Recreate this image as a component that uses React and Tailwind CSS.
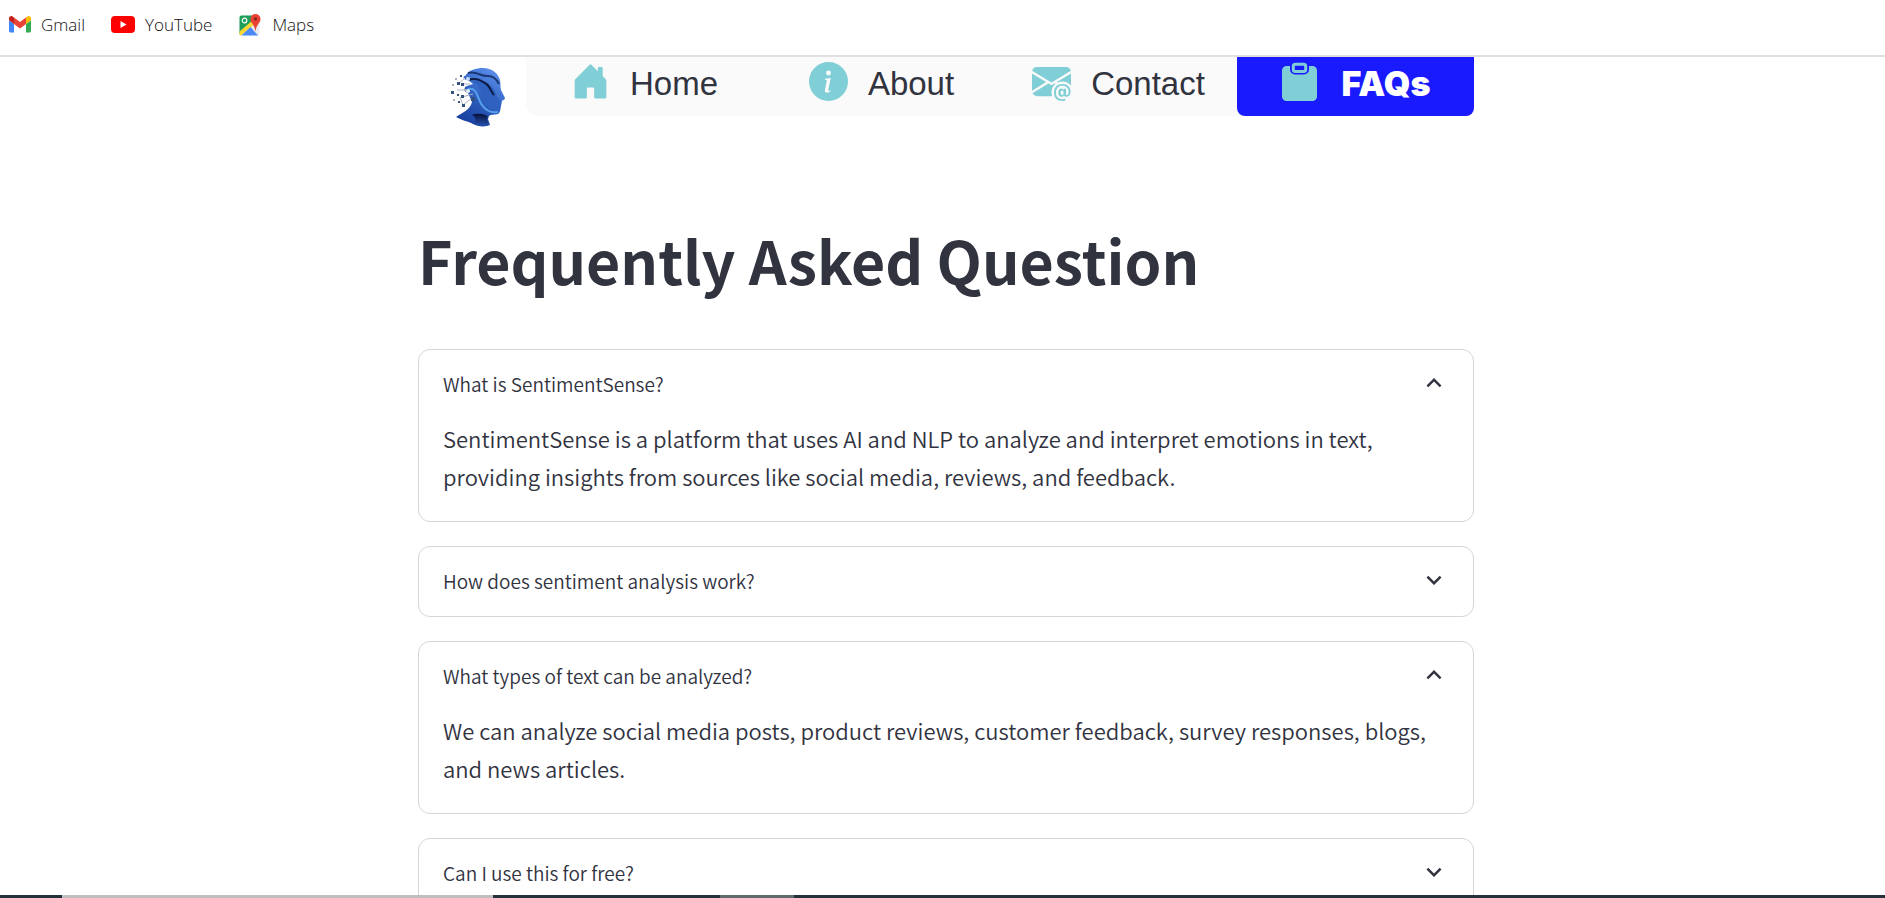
import { useState } from "react";
import { BsHouseDoorFill, BsInfoCircleFill, BsEnvelopeAtFill } from "react-icons/bs";
import { MdExpandLess, MdExpandMore } from "react-icons/md";

const GmailIcon = () => (
  <svg viewBox="0 0 88 66" className="w-[22px] shrink-0" aria-hidden="true">
    <path fill="#4285f4" d="M6 66h14V32L0 17v43c0 3.3 2.7 6 6 6" />
    <path fill="#34a853" d="M68 66h14c3.300 0 6-2.700 6-6V17L68 32" />
    <path fill="#fbbc04" d="M68 6v26l20-15V9c0-7.400-8.500-11.600-14.400-7.200" />
    <path fill="#ea4335" d="M20 32V6l24 18L68 6v26L44 50" />
    <path fill="#c5221f" d="M0 9v8l20 15V6l-5.600-4.200C8.500-2.600 0 1.600 0 9" />
  </svg>
);

const YouTubeIcon = () => (
  <svg viewBox="0 0 24 17" className="w-6 shrink-0" aria-hidden="true">
    <rect width="24" height="17" rx="4" fill="#f00" />
    <path d="M9.500 5v7l6-3.500z" fill="#fff" />
  </svg>
);

const MapsIcon = () => (
  <svg viewBox="0 0 24 24" className="w-6 shrink-0" aria-hidden="true">
    <rect x="1.500" y="2.500" width="20" height="20" rx="2" fill="#e8eaed" />
    <path d="M3.500 2.500h13L12 12 1.500 21.500v-17a2 2 0 0 1 2-2" fill="#1e9e5a" />
    <path d="M1.500 18.500 15 7l3 3L3 22.500H2l-.5-1z" fill="#fdd835" />
    <path d="M3.500 22.500 12.500 14l7.500 8.500z" fill="#4c8bf5" />
    <circle cx="6.500" cy="7.500" r="2.300" fill="none" stroke="#fff" strokeWidth="1.200" />
    <path d="M17.500 1a5 5 0 0 0-5 5c0 4.200 4.200 5.200 4.700 11.500h.6C18.300 11.200 22.500 10.200 22.500 6a5 5 0 0 0-5-5" fill="#ea4335" />
    <circle cx="17.500" cy="6" r="1.800" fill="#8c2a22" />
  </svg>
);

const ClipboardIcon = ({ className }) => (
  <svg viewBox="0 0 39 39" className={className} aria-hidden="true">
    <path
      fill="currentColor"
      d="M5.500 4H9v3.500a5 5 0 0 0 5 5h9a5 5 0 0 0 5-5V4h3.500a4.500 4.500 0 0 1 4.500 4.500v26a4.500 4.500 0 0 1-4.500 4.500h-26A4.500 4.500 0 0 1 1 34.500v-26A4.500 4.500 0 0 1 5.500 4"
    />
    <rect x="12.300" y="2.200" width="12.400" height="7.200" rx="2" fill="none" stroke="currentColor" strokeWidth="3" />
  </svg>
);

const HeadLogo = () => (
  <svg viewBox="0 0 56 60" className="w-14 shrink-0" role="img" aria-label="SentimentSense">
    <defs>
      <linearGradient id="head" x1="0.200" y1="1" x2="0.700" y2="0">
        <stop offset="0" stopColor="#173c9c" />
        <stop offset="0.500" stopColor="#2e5fbd" />
        <stop offset="1" stopColor="#5a8eea" />
      </linearGradient>
      <linearGradient id="neck" x1="0" y1="0" x2="0" y2="1">
        <stop offset="0" stopColor="#06113a" />
        <stop offset="1" stopColor="#2450ad" />
      </linearGradient>
    </defs>
    <path
      fill="url(#head)"
      d="M15 9C19 3 26 1 33 1c9 0 15 5 17 12 1 4 0 7 1 10l4 8c0 2-3 2-3 3l-1 5c-1 2 0 6-3 8-3 1-7 0-9 2l-1 3 2 6c-4 2-12 2-17-1-5-3-10-3-17-7 7-5 14-7 16-15l-4-9c-4-1-5-6-1-7l6-2-5-4c-4 0-5-2-4-4"
    />
    <path fill="#2f62c0" d="M22 14c9-3 12 2 18 5 6 3 5 11 11 16l-1 9c-8 2-13-3-16-11-3-7-4-14-12-19" />
    <path fill="url(#neck)" d="M22 48c5-2 9-1 14 0 2 1 2 2 1 4l2 5c-4 2-10 2-14 0 1-4 1-7-3-9" />
    <path fill="none" stroke="#1b3877" strokeWidth="2" d="M18 6c8-3 13 4 20 3 6 0 9 4 11 8" />
    <path fill="none" stroke="#0d1c44" strokeWidth="2" d="M18 13c9-3 13 1 17 3 6 3 5 8 9 12" />
    <path fill="none" stroke="#58a0ee" strokeWidth="2" d="M18 22c10-2 9 10 14 16 4 6 10 8 16 7" />
    <circle cx="18" cy="24" r="2" fill="#e8f0fc" />
    <circle cx="18" cy="12" r="2" fill="#c9dbf8" />
    <path fill="none" stroke="#aab4c6" strokeWidth="1" d="M12 17h8M7 23h10M12 30l11-3M13 38l-3-8M13 38l10-8M8 17l7-6" />
    <g fill="#35517f">
      <rect x="10" y="8" width="2" height="2" />
      <rect x="7" y="15" width="3" height="3" />
      <rect x="11" y="16" width="3" height="3" />
      <rect x="1" y="24" width="3" height="3" />
      <rect x="7" y="27" width="2" height="2" />
      <rect x="11" y="28" width="3" height="3" />
      <rect x="21" y="30" width="4" height="4" />
      <rect x="12" y="37" width="3" height="3" />
      <rect x="8" y="34" width="2" height="2" />
    </g>
    <g fill="#a9b1bf">
      <rect x="2" y="17" width="2" height="2" />
      <rect x="3" y="32" width="2" height="2" />
      <rect x="5" y="11" width="2" height="2" />
      <rect x="14" y="22" width="2" height="2" />
    </g>
  </svg>
);

const bookmarks = [
  { label: "Gmail", Icon: GmailIcon },
  { label: "YouTube", Icon: YouTubeIcon },
  { label: "Maps", Icon: MapsIcon },
];

const navItems = [
  { label: "Home", Icon: BsHouseDoorFill },
  { label: "About", Icon: BsInfoCircleFill },
  { label: "Contact", Icon: BsEnvelopeAtFill },
  { label: "FAQs", Icon: ClipboardIcon, active: true },
];

const faqs = [
  {
    question: "What is SentimentSense?",
    answer:
      "SentimentSense is a platform that uses AI and NLP to analyze and interpret emotions in text, providing insights from sources like social media, reviews, and feedback.",
    open: true,
  },
  {
    question: "How does sentiment analysis work?",
    answer: "Sentiment analysis uses language models to classify the emotion expressed in text.",
  },
  {
    question: "What types of text can be analyzed?",
    answer:
      "We can analyze social media posts, product reviews, customer feedback, survey responses, blogs, and news articles.",
    open: true,
  },
  { question: "Can I use this for free?", answer: "Yes, you can use it for free." },
];

function Faq({ id, question, answer, initiallyOpen }) {
  const [open, setOpen] = useState(initiallyOpen);
  const Chevron = open ? MdExpandLess : MdExpandMore;
  return (
    <section className="rounded-xl border border-[#d5d6d8] font-[350]">
      <button
        type="button"
        aria-expanded={open}
        aria-controls={id}
        onClick={() => setOpen(!open)}
        className="flex h-[69px] w-full items-center justify-between px-6 text-left text-[19px]"
      >
        <span>{question}</span>
        <Chevron className="mb-1 size-[30px]" />
      </button>
      {open && (
        <p id={id} className="px-6 pb-[26px] text-[22px] leading-[38px]">
          {answer}
        </p>
      )}
    </section>
  );
}

export default function App() {
  return (
    <div className="flex h-screen flex-col overflow-hidden bg-white text-[#31333f]">
      <nav
        aria-label="Bookmarks"
        className="flex h-[57px] shrink-0 items-center gap-[26px] border-b-2 border-[#e0e0e0] px-[9px] pb-1.5 font-['Open_Sans',sans-serif] text-[17px] font-light text-[#111]"
      >
        {bookmarks.map(({ label, Icon }) => (
          <a key={label} href="#" className="flex items-center gap-2.5">
            <Icon />
            {label}
          </a>
        ))}
      </nav>

      <main className="min-h-0 flex-1 overflow-hidden pl-[7px]">
        <div className="mx-auto w-full max-w-[1056px] font-['Noto_Sans_CJK_SC',sans-serif]">
          <header className="flex items-start gap-5 pl-8">
            <a href="#" className="mt-[10px]">
              <HeadLogo />
            </a>
            <nav
              aria-label="Main"
              className="grid flex-1 grid-cols-4 rounded-b-xl bg-[#fafafa] font-['Liberation_Sans',Arial,sans-serif] text-[33px]"
            >
              {navItems.map(({ label, Icon, active }) => (
                <a
                  key={label}
                  href="#"
                  aria-current={active ? "page" : undefined}
                  className={
                    active
                      ? "flex h-[59px] items-center justify-center gap-[22px] rounded-b-lg bg-[#1a1aff] pb-2.5 font-['Inter',sans-serif] text-[34px] font-black text-white"
                      : "flex h-[59px] items-center justify-center gap-5 pb-2.5"
                  }
                >
                  <Icon className="size-[39px] shrink-0 text-[#80ced6]" />
                  <span className="pt-1">{label}</span>
                </a>
              ))}
            </nav>
          </header>

          <h1 className="mt-[93px] text-[59px] leading-20 font-bold">Frequently Asked Question</h1>

          <div className="mt-[49px] flex flex-col gap-6">
            {faqs.map(({ question, answer, open }, i) => (
              <Faq key={question} id={`answer-${i}`} question={question} answer={answer} initiallyOpen={Boolean(open)} />
            ))}
          </div>
        </div>
      </main>

      <div className="flex h-[3px] shrink-0 bg-[#22313a]">
        <div className="ml-[62px] w-[431px] bg-[#c0bebe]" />
        <div className="ml-[227px] w-[74px] bg-[#5f6b6d]" />
      </div>
    </div>
  );
}
